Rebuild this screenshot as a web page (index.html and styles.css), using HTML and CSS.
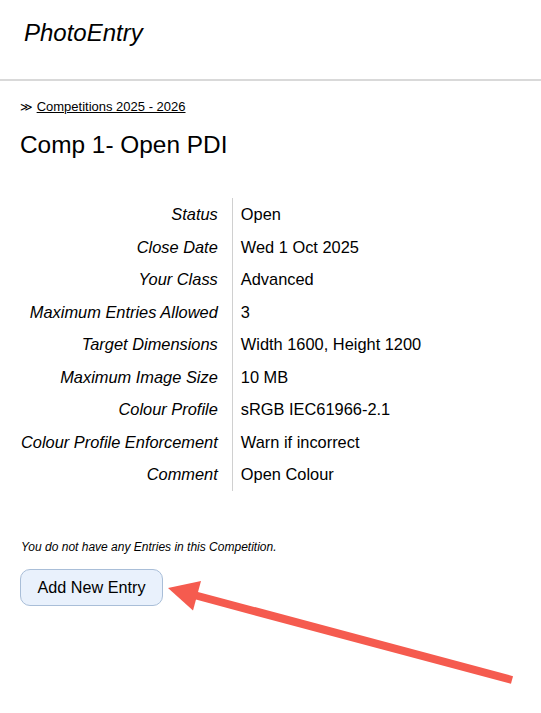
FILE: index.html
```html
<!DOCTYPE html>
<html lang="en">
<head>
  <meta charset="UTF-8" />
  <meta name="viewport" content="width=device-width, initial-scale=1.0"/>
  <title>PhotoEntry - Comp 1- Open PDI</title>
  <link rel="stylesheet" href="styles.css">
</head>
<body>

  <header class="site-header">
    <div class="brand">PhotoEntry</div>
  </header>

  <main class="content">
    <div class="breadcrumb">
      <span class="crumb-sep">&#8811;</span> <a href="#">Competitions 2025 - 2026</a>
    </div>

    <h1>Comp 1- Open PDI</h1>

    <table class="details">
      <tr><th>Status</th><td>Open</td></tr>
      <tr><th>Close Date</th><td>Wed 1 Oct 2025</td></tr>
      <tr><th>Your Class</th><td>Advanced</td></tr>
      <tr><th>Maximum Entries Allowed</th><td>3</td></tr>
      <tr><th>Target Dimensions</th><td>Width 1600, Height 1200</td></tr>
      <tr><th>Maximum Image Size</th><td>10 MB</td></tr>
      <tr><th>Colour Profile</th><td>sRGB IEC61966-2.1</td></tr>
      <tr><th>Colour Profile Enforcement</th><td>Warn if incorrect</td></tr>
      <tr><th>Comment</th><td>Open Colour</td></tr>
    </table>

    <p class="note">You do not have any Entries in this Competition.</p>

    <button class="add-btn">Add New Entry</button>
  </main>

  <!-- annotation arrow pointing at the button -->
  <svg class="arrow" width="541" height="713" viewBox="0 0 541 713">
    <line x1="512" y1="680" x2="196" y2="595.5" stroke="#f55b4f" stroke-width="8" />
    <polygon points="168,588 201,581 193,610.5" fill="#f55b4f" />
  </svg>

</body>
</html>
```

FILE: styles.css
```css
body {
  font-family: "Liberation Sans", Arial, sans-serif;
  background-color: #fff;
  color: #000;
  margin: 0;
  padding: 0;
}

.site-header {
  height: 81px;
  box-sizing: border-box;
  padding: 19px 0 0 24px;
  border-bottom: 2px solid #d9d9d9;
}

.brand {
  font-size: 24px;
  line-height: 28px;
  font-style: italic;
}

.content {
  padding: 18px 20px 0 20px;
}

.breadcrumb {
  font-size: 13px;
  line-height: 16px;
}

.breadcrumb a {
  color: #000;
  text-decoration: underline;
}

.crumb-sep {
  font-size: 12px;
}

h1 {
  font-size: 24.4px;
  line-height: 28px;
  font-weight: normal;
  margin: 16px 0 39px 0;
}

.details {
  border-collapse: collapse;
  font-size: 16.4px;
  line-height: 20px;
}

.details th {
  font-weight: normal;
  font-style: italic;
  text-align: right;
  padding: 6.25px 14px 6.25px 1px;
  border-right: 1px solid #d0d0d0;
}

.details td {
  text-align: left;
  padding: 6.25px 8px;
}

.note {
  font-size: 12px;
  line-height: 14px;
  font-style: italic;
  margin: 49px 0 15px 1px;
}

.add-btn {
  font-family: "Liberation Sans", Arial, sans-serif;
  font-size: 16.2px;
  height: 37px;
  width: 143px;
  padding: 0;
  color: #000;
  background-color: #e9f1fc;
  border: 1px solid #a9bed8;
  border-radius: 10px;
  cursor: pointer;
}

.add-btn:hover {
  background-color: #dce8f9;
}

.arrow {
  position: absolute;
  top: 0;
  left: 0;
  pointer-events: none;
}
```
